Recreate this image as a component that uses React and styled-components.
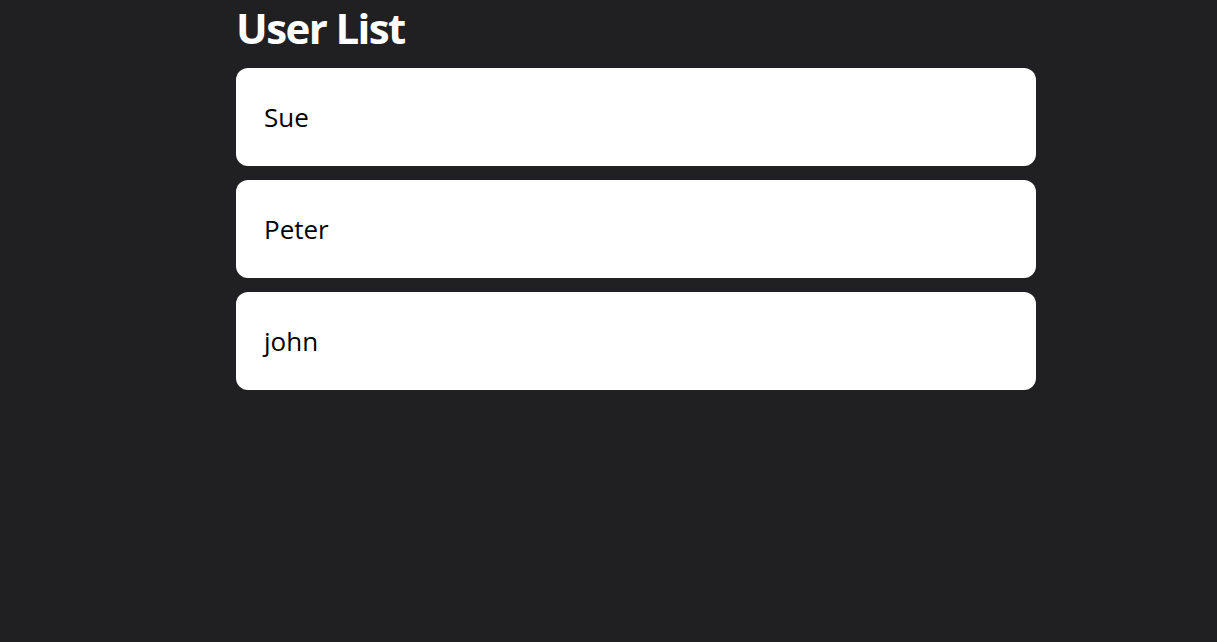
import React from "react";
import styled, { createGlobalStyle } from "styled-components";

const GlobalStyle = createGlobalStyle`
  html, body {
    margin: 0;
    padding: 0;
    background-color: #202022;
  }
  body {
    min-height: 100vh;
    font-family: "Open Sans", "Noto Sans", sans-serif;
  }
`;

const Page = styled.div`
  min-height: 642px;
  background-color: #202022;
  padding: 0 0 0 236px;
  box-sizing: border-box;
`;

const Wrapper = styled.div`
  width: 800px;
  display: flex;
  flex-direction: column;
`;

const Title = styled.h1`
  margin: 0;
  padding-top: 1px;
  height: 67px;
  font-size: 42px;
  font-weight: 700;
  line-height: 54px;
  letter-spacing: -1.6px;
  color: #ffffff;
`;

const List = styled.div`
  display: flex;
  flex-direction: column;
  gap: 14px;
`;

const UserCard = styled.div`
  height: 98px;
  background-color: #ffffff;
  border-radius: 12px;
  padding: 0 28px;
  display: flex;
  align-items: center;
  box-sizing: border-box;
  font-size: 26px;
  color: #000000;
`;

const users = ["Sue", "Peter", "john"];

const App = () => {
  return (
    <Page>
      <GlobalStyle />
      <Wrapper>
        <Title>User List</Title>
        <List>
          {users.map((name) => (
            <UserCard key={name}>{name}</UserCard>
          ))}
        </List>
      </Wrapper>
    </Page>
  );
};

export default App;
